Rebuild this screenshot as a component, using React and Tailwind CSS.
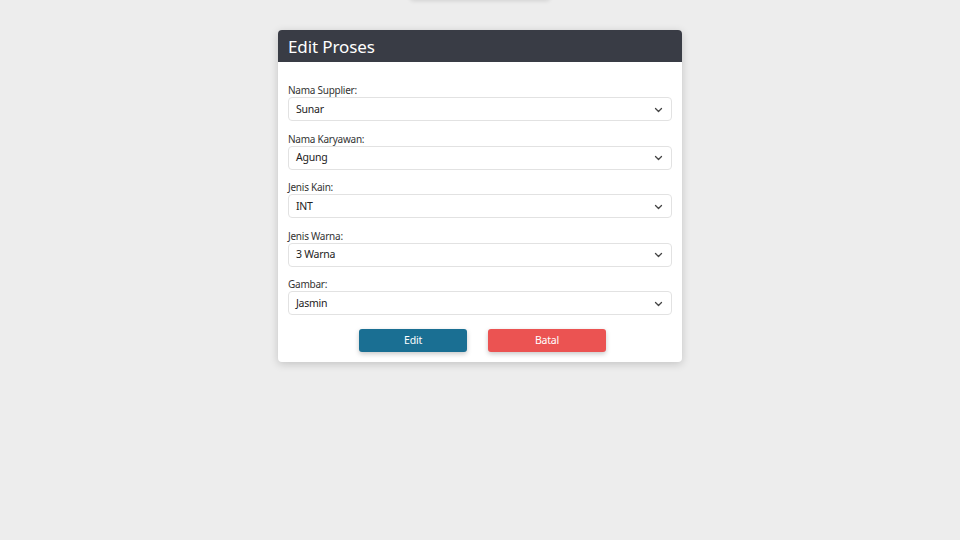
import React from "react";

const fields = [
  { label: "Nama Supplier:", value: "Sunar" },
  { label: "Nama Karyawan:", value: "Agung" },
  { label: "Jenis Kain:", value: "INT" },
  { label: "Jenis Warna:", value: "3 Warna" },
  { label: "Gambar:", value: "Jasmin" },
];

function Chevron() {
  return (
    <svg width="9" height="6" viewBox="0 0 9 6" fill="none">
      <path d="M1.5 1.5l3 3 3-3" stroke="#444" strokeWidth="1.3" strokeLinecap="round" strokeLinejoin="round" />
    </svg>
  );
}

export default function App() {
  return (
    <div
      className="relative min-h-[540px] w-full overflow-hidden bg-[#ededed]"
      style={{ fontFamily: '"Noto Sans", "Open Sans", sans-serif' }}
    >
      <div className="absolute left-[410px] top-[-40px] h-[40px] w-[140px] rounded bg-[#ededed] shadow-[0_1px_4px_rgba(0,0,0,0.12)]" />
      <div className="mx-auto mt-[30px] w-[404px] overflow-hidden rounded-[4px] bg-white shadow-[0_2px_8px_rgba(0,0,0,0.18)]">
        <div className="flex h-[32px] items-center bg-[#393c45] px-[10px]">
          <h1 className="pt-[1px] text-[17px] leading-none tracking-[-0.1px] text-white">Edit Proses</h1>
        </div>
        <div className="flex flex-col px-[10px] pb-[10px] pt-[21px]">
          <div className="flex flex-col gap-[10.5px]">
            {fields.map((f) => (
              <div key={f.label} className="flex flex-col">
                <label className="text-[10px] leading-[14px] tracking-[-0.25px] text-[#333]">{f.label}</label>
                <div className="flex h-[24px] items-center justify-between rounded-[4px] border border-[#e2e2e2] bg-white pl-[7px] pr-[8px] pt-[1px] text-[10.5px] tracking-[-0.25px] text-[#222]">
                  <span>{f.value}</span>
                  <Chevron />
                </div>
              </div>
            ))}
          </div>
          <div className="mt-[14px] flex justify-center gap-[21px] pl-[5px]">
            <button className="h-[23px] w-[108px] rounded-[3px] bg-[#1a6f93] pt-[1px] text-[10.5px] tracking-[-0.2px] text-white shadow-[0_2px_5px_rgba(0,0,0,0.22)]">
              Edit
            </button>
            <button className="h-[23px] w-[118px] rounded-[3px] bg-[#eb5352] pt-[1px] text-[10.5px] tracking-[-0.2px] text-white shadow-[0_2px_5px_rgba(0,0,0,0.22)]">
              Batal
            </button>
          </div>
        </div>
      </div>
    </div>
  );
}
